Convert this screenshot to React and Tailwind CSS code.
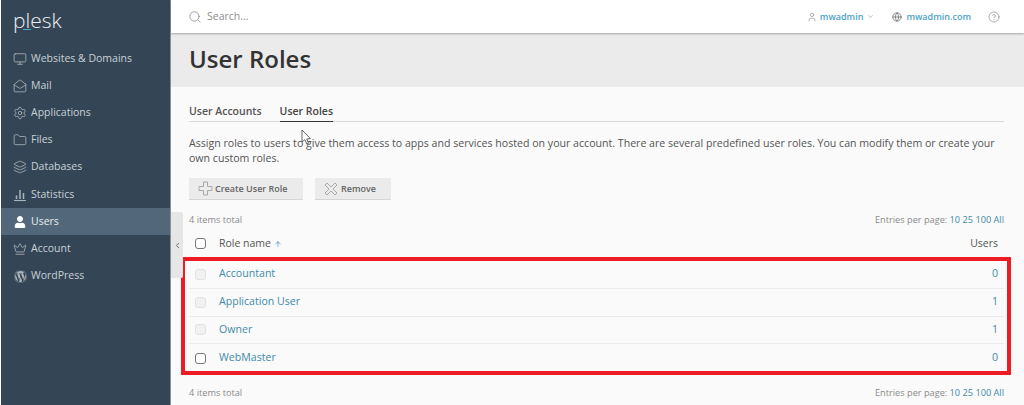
import React from "react";
import { Search, Monitor, MailOpen, Settings, Folder, Layers, Crown, User, Globe, CircleHelp, ChevronDown, ChevronLeft, ArrowUp } from "lucide-react";
import { FaUser, FaWordpress } from "react-icons/fa";

const StatsIcon = () => (
  <svg width="14" height="14" viewBox="0 0 14 14" fill="none" stroke="currentColor" strokeWidth="1.1">
    <path d="M1 12.5 H13" />
    <path d="M3.5 11 V7.5 M7 11 V2 M10.5 11 V5" strokeWidth="1.5" />
  </svg>
);

const PlusOutline = () => (
  <svg width="15" height="15" viewBox="0 0 15 15" fill="none" stroke="#a3a3a3" strokeWidth="0.9">
    <path d="M5.5 1 H9.5 V5.5 H14 V9.5 H9.5 V14 H5.5 V9.5 H1 V5.5 H5.5 Z" />
  </svg>
);

const CrossOutline = () => (
  <svg width="14" height="14" viewBox="0 0 14 14" fill="none" stroke="#a3a3a3" strokeWidth="0.9">
    <path d="M3 1 L7 5 L11 1 L13 3 L9 7 L13 11 L11 13 L7 9 L3 13 L1 11 L5 7 L1 3 Z" />
  </svg>
);

const navItems = [
  { label: "Websites & Domains", icon: <Monitor size={14} strokeWidth={1.4} /> },
  { label: "Mail", icon: <MailOpen size={14} strokeWidth={1.4} /> },
  { label: "Applications", icon: <Settings size={14} strokeWidth={1.4} /> },
  { label: "Files", icon: <Folder size={14} strokeWidth={1.4} /> },
  { label: "Databases", icon: <Layers size={14} strokeWidth={1.4} /> },
  { label: "Statistics", icon: <StatsIcon /> },
  { label: "Users", icon: <FaUser size={12} className="text-white" />, active: true },
  { label: "Account", icon: <Crown size={14} strokeWidth={1.4} /> },
  { label: "WordPress", icon: <FaWordpress size={13} /> },
];

const roles = [
  { name: "Accountant", users: 0, locked: true },
  { name: "Application User", users: 1, locked: true },
  { name: "Owner", users: 1, locked: true },
  { name: "WebMaster", users: 0, locked: false },
];

const Checkbox = ({ locked }) => (
  <span
    className={`block w-[11px] h-[11px] rounded-[3px] border ${
      locked ? "border-[#e2e2e2] bg-[#f1f1f1]" : "border-[#777] bg-white"
    }`}
  />
);

const ListInfo = () => (
  <div className="flex justify-between items-center h-[14px] text-[9.2px] text-[#8a8a8a]">
    <span>4 items total</span>
    <span>
      Entries per page: <span className="text-[#3f8aa8]">10 25 100 All</span>
    </span>
  </div>
);

const App = () => {
  return (
    <div className="relative flex w-[1024px] h-[405px] overflow-hidden bg-[#fafafa] font-['Open_Sans',sans-serif]">
      {/* Sidebar */}
      <aside className="w-[169px] shrink-0 ml-px bg-[#344655] text-[#c9d1d7]">
        <div className="relative h-[45px] pl-3 pt-[5px]">
          <span className="block text-[21px] leading-[30px] font-light text-[#eef1f3]">plesk</span>
          <span className="absolute left-[22px] top-[29px] w-2 h-px bg-[#3fb0d0]" />
        </div>
        <nav>
          {navItems.map((item) => (
            <div
              key={item.label}
              className={`flex items-center h-[27.2px] pl-3 gap-[4px] text-[10.5px] font-medium ${
                item.active ? "bg-[#52687a] text-[#e8ecef]" : ""
              }`}
            >
              <span className="flex justify-center items-center w-[14px] text-[#aab4bc]">{item.icon}</span>
              {item.label}
            </div>
          ))}
        </nav>
      </aside>
      <div className="w-px shrink-0 bg-[#8f8f8f]" />

      {/* Main */}
      <main className="relative flex-1 min-w-0 flex flex-col">
        <header className="flex items-center h-[33px] pl-[17px] pr-[24px] bg-white shadow-[0_1px_2px_rgba(0,0,0,0.3)] z-10">
          <Search size={14} strokeWidth={1.4} className="text-[#8c8c8c]" />
          <span className="ml-[5px] text-[10.5px] text-[#8e8e8e]">Search...</span>
          <div className="ml-auto flex items-center text-[9px] font-semibold text-[#4aa3c7]">
            <User size={10} strokeWidth={1.5} className="text-[#888]" />
            <span className="ml-[3px]">mwadmin</span>
            <ChevronDown size={7} className="ml-[4px] text-[#888]" />
            <Globe size={10} strokeWidth={2} className="ml-[18px] text-[#777]" />
            <span className="ml-[4px]">mwadmin.com</span>
            <CircleHelp size={12} strokeWidth={1.2} className="ml-[17px] text-[#777]" />
          </div>
        </header>

        <div className="h-[54px] shrink-0 flex items-center pl-[18px] pb-[2px] bg-[#ebebeb]">
          <h1 className="text-[24px] leading-none font-semibold text-[#333]">User Roles</h1>
        </div>

        <div className="pl-[18px] pr-[20px]">
          {/* Tabs */}
          <div className="flex gap-[18px] h-[35px] border-b border-[#d8d8d8] text-[10.5px] font-semibold text-[#555]">
            <span className="pt-[17px]">User Accounts</span>
            <span className="pt-[17px] -mb-px border-b-[1.5px] border-[#333] text-[#444]">User Roles</span>
          </div>

          <p className="mt-[14px] text-[10.6px] leading-[15px] text-[#555]">
            Assign roles to users to give them access to apps and services hosted on your account. There are several predefined user roles. You can modify them or create your own custom roles.
          </p>

          {/* Toolbar */}
          <div className="flex gap-3 mt-[12px] text-[9px] font-semibold text-[#666]">
            <button className="flex items-center h-[21px] w-[114px] pl-[9px] gap-[2px] bg-[#ebebeb] shadow-[0_1px_0_#d5d5d5]">
              <PlusOutline />
              Create User Role
            </button>
            <button className="flex items-center h-[21px] w-[76px] pl-[9px] gap-[3px] bg-[#ebebeb] shadow-[0_1px_0_#d5d5d5]">
              <CrossOutline />
              Remove
            </button>
          </div>

          <div className="mt-[14px]">
            <ListInfo />
          </div>

          {/* Table head */}
          <div className="flex items-center h-[25px] mt-[4px] pl-[6px] pr-[6px] text-[10.5px] text-[#555]">
            <Checkbox />
            <span className="ml-[13px]">Role name</span>
            <ArrowUp size={8} className="ml-[3px] text-[#3f8aa8]" />
            <span className="ml-auto">Users</span>
          </div>

          {/* Rows, marked with the red frame */}
          <div className="-ml-[8px] -mr-[7px] mt-[1px] pl-[4px] pr-[3px] border-4 border-[#ed1c24] h-[118px] overflow-hidden">
            {roles.map((role, i) => (
              <div
                key={role.name}
                className={`flex items-center h-[27.75px] pl-[6px] pr-[6px] text-[10.6px] text-[#3f8aa8] ${
                  i < roles.length - 1 ? "border-b border-[#ececec]" : ""
                }`}
              >
                <Checkbox locked={role.locked} />
                <span className="ml-[13px]">{role.name}</span>
                <span className="ml-auto">{role.users}</span>
              </div>
            ))}
          </div>

          <div className="mt-[11px]">
            <ListInfo />
          </div>
        </div>

        {/* Sidebar collapse handle */}
        <div className="absolute left-0 top-[212px] w-[12px] h-[66px] flex items-center justify-center bg-[#e6e6e6] rounded-r-[2px]">
          <ChevronLeft size={9} strokeWidth={2.5} className="text-[#666]" />
        </div>

        {/* Mouse pointer from the capture */}
        <svg className="absolute left-[130px] top-[129px] z-20" width="11" height="17" viewBox="0 0 11 17">
          <path d="M1 1 L1 13 L3.8 10.6 L5.8 15 L7.6 14.2 L5.7 10 L9.4 9.6 Z" fill="#fff" stroke="#555" strokeWidth="0.9" />
        </svg>
      </main>
    </div>
  );
};

export default App;
